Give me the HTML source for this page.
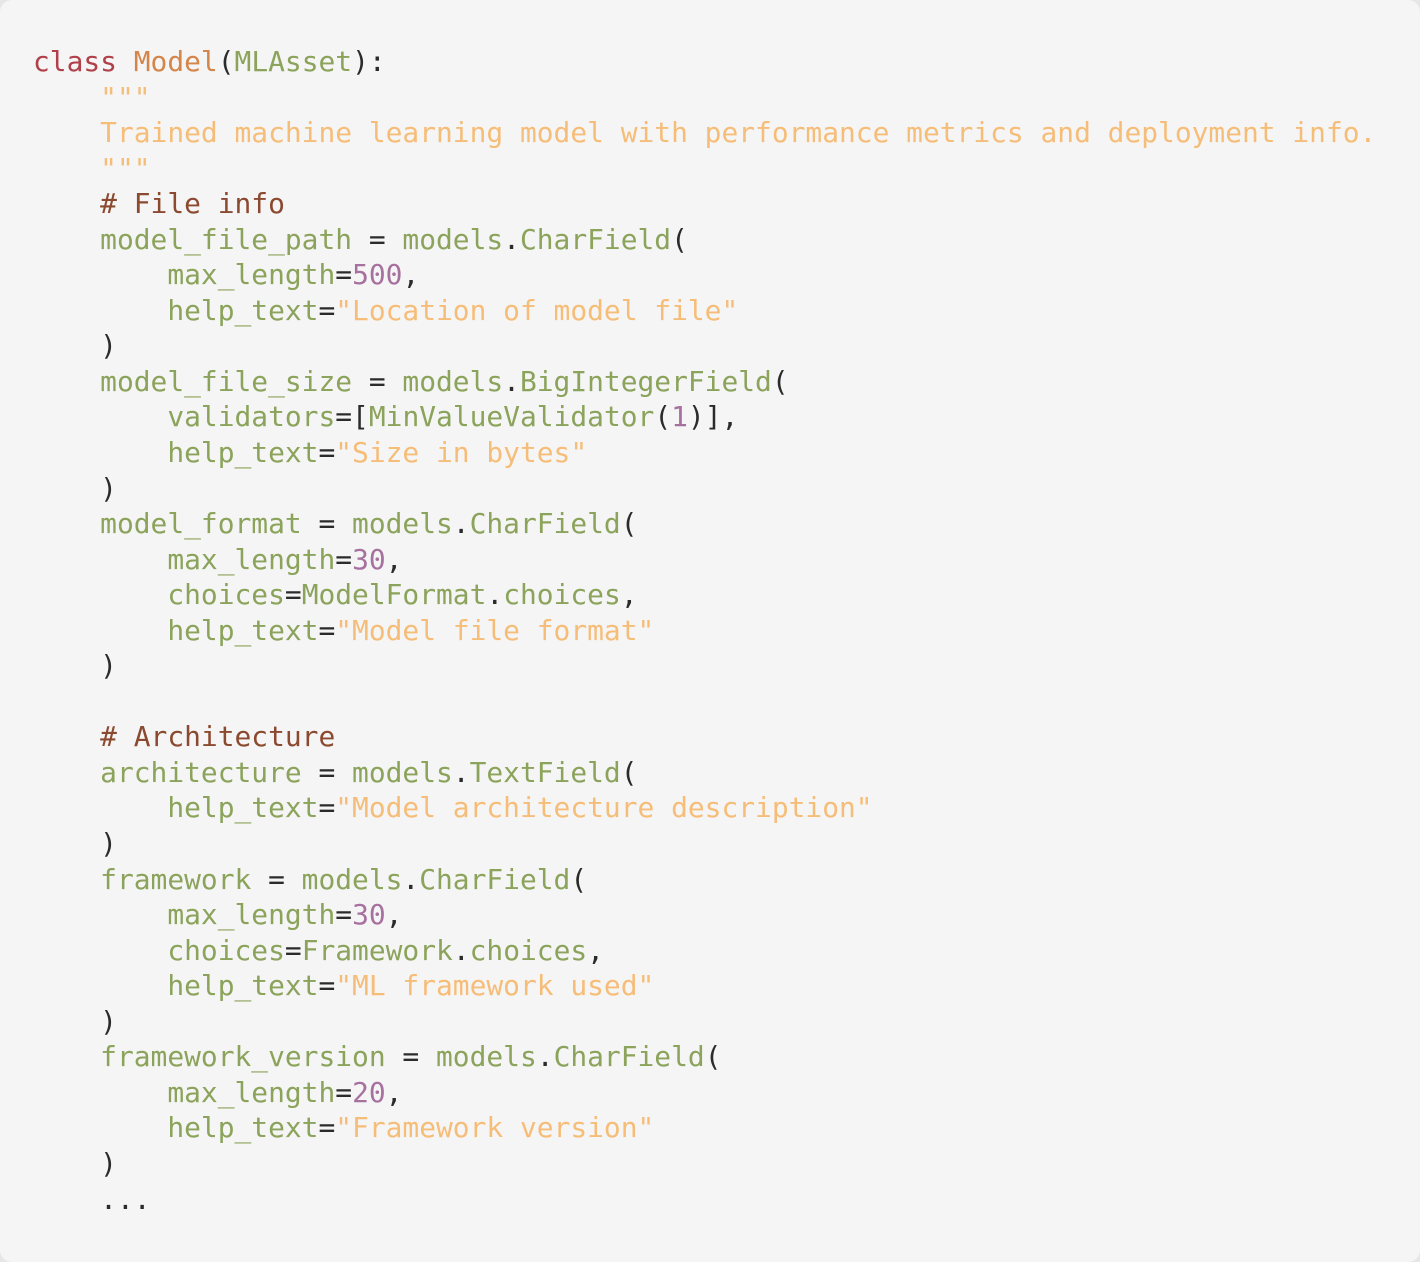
<!DOCTYPE html>
<html><head><meta charset="utf-8"><style>
html,body{margin:0;padding:0;background:#e6e6e6;}
.box{position:absolute;left:0;top:0;width:1420px;height:1262px;background:#f5f5f5;border-radius:12px;}
pre{position:absolute;left:33px;top:44px;margin:0;font-family:"DejaVu Sans Mono","Liberation Mono",monospace;font-size:27.9px;line-height:35.55px;color:#2b2b2b;letter-spacing:0px;}
.k{color:#b0404a}.c{color:#d4854a}.g{color:#8ba35b}.s{color:#f6bd78}.n{color:#a6709f}.m{color:#8b4a30}
</style></head><body><div class="box"><pre><span class="k">class</span> <span class="c">Model</span>(<span class="g">MLAsset</span>):
    <span class="s">"""</span>
    <span class="s">Trained machine learning model with performance metrics and deployment info.</span>
    <span class="s">"""</span>
    <span class="m"># File info</span>
    <span class="g">model_file_path</span> = <span class="g">models</span>.<span class="g">CharField</span>(
        <span class="g">max_length</span>=<span class="n">500</span>,
        <span class="g">help_text</span>=<span class="s">"Location of model file"</span>
    )
    <span class="g">model_file_size</span> = <span class="g">models</span>.<span class="g">BigIntegerField</span>(
        <span class="g">validators</span>=[<span class="g">MinValueValidator</span>(<span class="n">1</span>)],
        <span class="g">help_text</span>=<span class="s">"Size in bytes"</span>
    )
    <span class="g">model_format</span> = <span class="g">models</span>.<span class="g">CharField</span>(
        <span class="g">max_length</span>=<span class="n">30</span>,
        <span class="g">choices</span>=<span class="g">ModelFormat</span>.<span class="g">choices</span>,
        <span class="g">help_text</span>=<span class="s">"Model file format"</span>
    )

    <span class="m"># Architecture</span>
    <span class="g">architecture</span> = <span class="g">models</span>.<span class="g">TextField</span>(
        <span class="g">help_text</span>=<span class="s">"Model architecture description"</span>
    )
    <span class="g">framework</span> = <span class="g">models</span>.<span class="g">CharField</span>(
        <span class="g">max_length</span>=<span class="n">30</span>,
        <span class="g">choices</span>=<span class="g">Framework</span>.<span class="g">choices</span>,
        <span class="g">help_text</span>=<span class="s">"ML framework used"</span>
    )
    <span class="g">framework_version</span> = <span class="g">models</span>.<span class="g">CharField</span>(
        <span class="g">max_length</span>=<span class="n">20</span>,
        <span class="g">help_text</span>=<span class="s">"Framework version"</span>
    )
    ...</pre></div></body></html>
